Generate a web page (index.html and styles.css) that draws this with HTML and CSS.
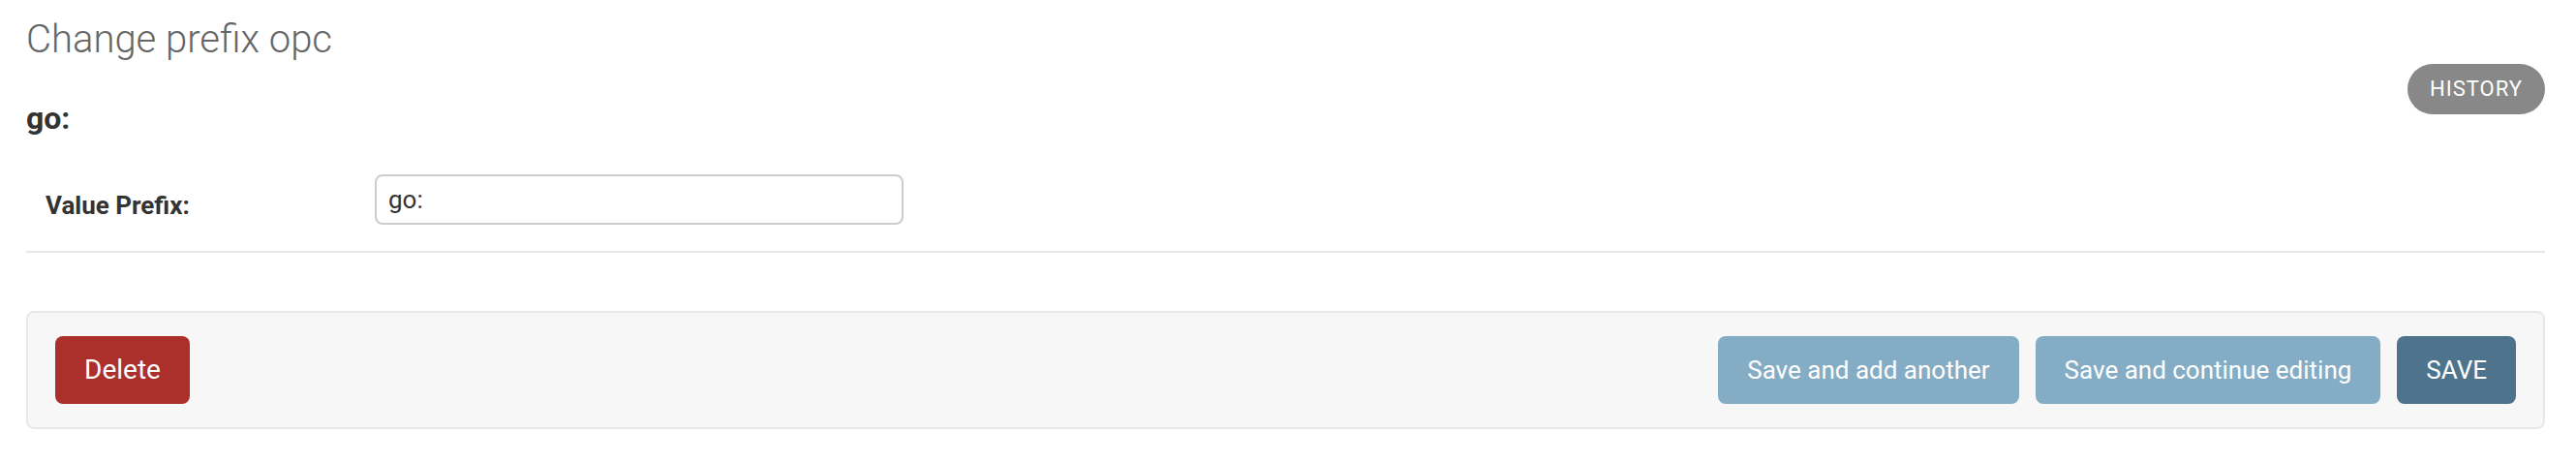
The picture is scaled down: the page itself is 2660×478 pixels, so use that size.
FILE: index.html
```html
<!DOCTYPE html>
<html lang="en">
<head>
<meta charset="utf-8">
<title>Change prefix opc</title>
<link rel="stylesheet" href="styles.css">
</head>
<body>
<div class="content">
  <ul class="object-tools">
    <li><a class="historylink" href="#">History</a></li>
  </ul>
  <h1 class="title">Change prefix opc</h1>
  <h2 class="subtitle">go:</h2>
  <form class="change-form">
    <fieldset class="module">
      <div class="form-row">
        <label class="required" for="id_value_prefix">Value Prefix:</label>
        <input type="text" id="id_value_prefix" class="text-field" value="go:">
      </div>
    </fieldset>
    <div class="submit-row">
      <a class="deletelink" href="#">Delete</a>
      <div class="save-group">
        <button type="button" class="btn">Save and add another</button>
        <button type="button" class="btn">Save and continue editing</button>
        <button type="button" class="btn btn-default">Save</button>
      </div>
    </div>
  </form>
</div>
</body>
</html>
```
FILE: styles.css
```css
html, body {
  margin: 0;
  padding: 0;
  background: #ffffff;
}

body {
  font-family: Roboto, "Liberation Sans", Arial, sans-serif;
  font-size: 28px;
  color: #333333;
}

.content {
  padding: 17px 32px 0 27px;
}

.object-tools {
  float: right;
  list-style: none;
  margin: 49px 0 0 0;
  padding: 0;
}

.historylink {
  display: block;
  height: 52px;
  box-sizing: border-box;
  padding: 6px 23px;
  line-height: 40px;
  background: #888888;
  color: #ffffff;
  border-radius: 30px;
  font-size: 22px;
  font-weight: 400;
  letter-spacing: 1px;
  text-transform: uppercase;
  text-decoration: none;
}

.title {
  margin: 0 0 40px 0;
  font-size: 40px;
  line-height: 47px;
  font-weight: 300;
  color: #666666;
}

.subtitle {
  margin: 32px 0 16px 0;
  font-size: 32px;
  line-height: 37px;
  font-weight: 700;
  color: #333333;
}

.change-form {
  clear: both;
}

.module {
  margin: 0 0 60px 0;
  padding: 0;
  border: none;
}

.form-row {
  display: flex;
  align-items: flex-start;
  padding: 23px 20px 27px 20px;
  border-bottom: 2px solid #e8e8e8;
  font-size: 26px;
}

.form-row label {
  width: 320px;
  padding: 14px 20px 0 0;
  font-weight: 700;
  color: #333333;
  line-height: 36px;
}

.text-field {
  width: 546px;
  height: 52px;
  box-sizing: border-box;
  margin: 0;
  padding: 0 12px;
  border: 2px solid #cccccc;
  border-radius: 8px;
  font-family: Roboto, "Liberation Sans", Arial, sans-serif;
  font-size: 26px;
  color: #333333;
  background: #ffffff;
}

.submit-row {
  display: flex;
  justify-content: space-between;
  align-items: center;
  padding: 24px 28px;
  background: #f7f7f7;
  border: 2px solid #e8e8e8;
  border-radius: 8px;
}

.deletelink {
  display: block;
  height: 70px;
  box-sizing: border-box;
  padding: 20px 30px;
  line-height: 30px;
  background: #ab302b;
  color: #ffffff;
  border-radius: 8px;
  font-size: 28px;
  text-decoration: none;
}

.save-group {
  display: flex;
  gap: 17px;
}

.btn {
  height: 70px;
  padding: 0 30px;
  border: none;
  border-radius: 8px;
  background: #84adc5;
  color: #ffffff;
  font-family: Roboto, "Liberation Sans", Arial, sans-serif;
  font-size: 26px;
  line-height: 30px;
  cursor: pointer;
}

.btn-default {
  background: #4e748d;
  text-transform: uppercase;
}
```
